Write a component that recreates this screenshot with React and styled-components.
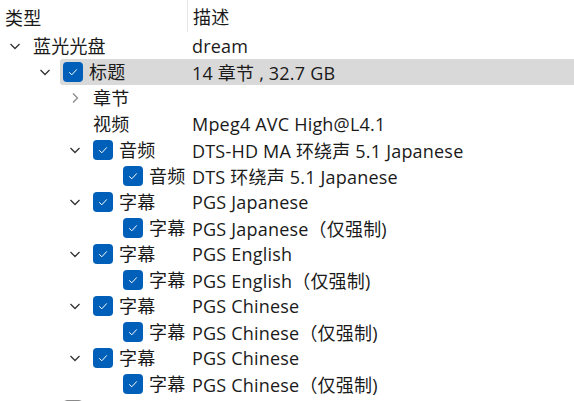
import React from 'react'
import styled, { createGlobalStyle } from 'styled-components'

const GlobalStyle = createGlobalStyle`
  html, body {
    margin: 0;
    padding: 0;
    background: #fff;
    overflow: hidden;
  }
  body {
    font-family: "Open Sans", "Noto Sans CJK SC", sans-serif;
    font-size: 18px;
    letter-spacing: 0.2px;
    color: #1a1a1a;
  }
`

const INDENT = 30

const Tree = styled.div`
  width: 574px;
  height: 401px;
  overflow: hidden;
`

const Header = styled.div`
  display: grid;
  grid-template-columns: 187px 1fr;
  height: 33px;
`

const HeaderCell = styled.div`
  display: flex;
  align-items: center;
  padding-left: 5px;
  border-left: ${p => (p.$divider ? '1px solid #e5e5e5' : 'none')};
  height: ${p => (p.$divider ? '32px' : '33px')};
  align-self: start;
`

const Row = styled.div`
  display: grid;
  grid-template-columns: 192px 1fr;
  height: 26px;
  position: relative;
`

const Highlight = styled.div`
  position: absolute;
  left: ${p => p.$left}px;
  right: 0;
  top: 0;
  bottom: 0;
  background: #d9d9d9;
  border-radius: 3px 0 0 3px;
`

const NameCell = styled.div`
  display: flex;
  align-items: center;
  position: relative;
  white-space: nowrap;
`

const Expander = styled.div`
  width: 30px;
  height: 26px;
  display: flex;
  align-items: center;
  justify-content: center;
  flex-shrink: 0;
  padding-right: 3px;
`

const Spacer = styled.div`
  width: 33px;
  flex-shrink: 0;
`

const Box = styled.div`
  width: 20px;
  height: 20px;
  border-radius: 4px;
  box-sizing: border-box;
  background: ${p => (p.$checked ? '#005fb8' : '#fff')};
  border: ${p => (p.$checked ? 'none' : '1px solid #8a8a8a')};
  display: flex;
  align-items: center;
  justify-content: center;
  margin-right: 6px;
  flex-shrink: 0;
`

const Label = styled.span`
  line-height: 26px;
`

const Desc = styled.div`
  display: flex;
  align-items: center;
  white-space: nowrap;
  position: relative;
`

const Chevron = ({ open }) => (
  <svg width="12" height="12" viewBox="0 0 12 12">
    {open ? (
      <polyline points="1.5,4 6,8.5 10.5,4" fill="none" stroke="#333" strokeWidth="1.3" />
    ) : (
      <polyline points="4,1.5 8.5,6 4,10.5" fill="none" stroke="#8a8a8a" strokeWidth="1.3" />
    )}
  </svg>
)

const Check = () => (
  <svg width="12" height="12" viewBox="0 0 12 12">
    <polyline points="2.2,6.3 4.8,8.8 9.8,3.4" fill="none" stroke="#fff" strokeWidth="1" />
  </svg>
)

const rows = [
  { level: 0, exp: 'open', name: '蓝光光盘', desc: 'dream' },
  { level: 1, exp: 'open', check: true, name: '标题', desc: '14 章节 , 32.7 GB', selected: true },
  { level: 2, exp: 'closed', name: '章节', desc: '' },
  { level: 2, name: '视频', desc: 'Mpeg4 AVC High@L4.1' },
  { level: 2, exp: 'open', check: true, name: '音频', desc: 'DTS-HD MA 环绕声 5.1 Japanese' },
  { level: 3, check: true, name: '音频', desc: 'DTS 环绕声 5.1 Japanese' },
  { level: 2, exp: 'open', check: true, name: '字幕', desc: 'PGS Japanese' },
  { level: 3, check: true, name: '字幕', desc: 'PGS Japanese（仅强制)' },
  { level: 2, exp: 'open', check: true, name: '字幕', desc: 'PGS English' },
  { level: 3, check: true, name: '字幕', desc: 'PGS English（仅强制)' },
  { level: 2, exp: 'open', check: true, name: '字幕', desc: 'PGS Chinese' },
  { level: 3, check: true, name: '字幕', desc: 'PGS Chinese（仅强制)' },
  { level: 2, exp: 'open', check: true, name: '字幕', desc: 'PGS Chinese' },
  { level: 3, check: true, name: '字幕', desc: 'PGS Chinese（仅强制)' },
  { level: 1, check: false, name: '', desc: '' },
]

function TreeRow({ row }) {
  const pad = row.level * INDENT
  return (
    <Row>
      {row.selected && <Highlight $left={pad + INDENT} />}
      <NameCell style={{ paddingLeft: pad }}>
        {row.exp ? (
          <Expander>
            <Chevron open={row.exp === 'open'} />
          </Expander>
        ) : (
          <Spacer />
        )}
        {row.check !== undefined && (
          <Box $checked={row.check}>{row.check && <Check />}</Box>
        )}
        <Label>{row.name}</Label>
      </NameCell>
      <Desc>{row.desc}</Desc>
    </Row>
  )
}

export default function App() {
  return (
    <>
      <GlobalStyle />
      <Tree>
        <Header>
          <HeaderCell>类型</HeaderCell>
          <HeaderCell $divider>描述</HeaderCell>
        </Header>
        {rows.map((row, i) => (
          <TreeRow key={i} row={row} />
        ))}
      </Tree>
    </>
  )
}
